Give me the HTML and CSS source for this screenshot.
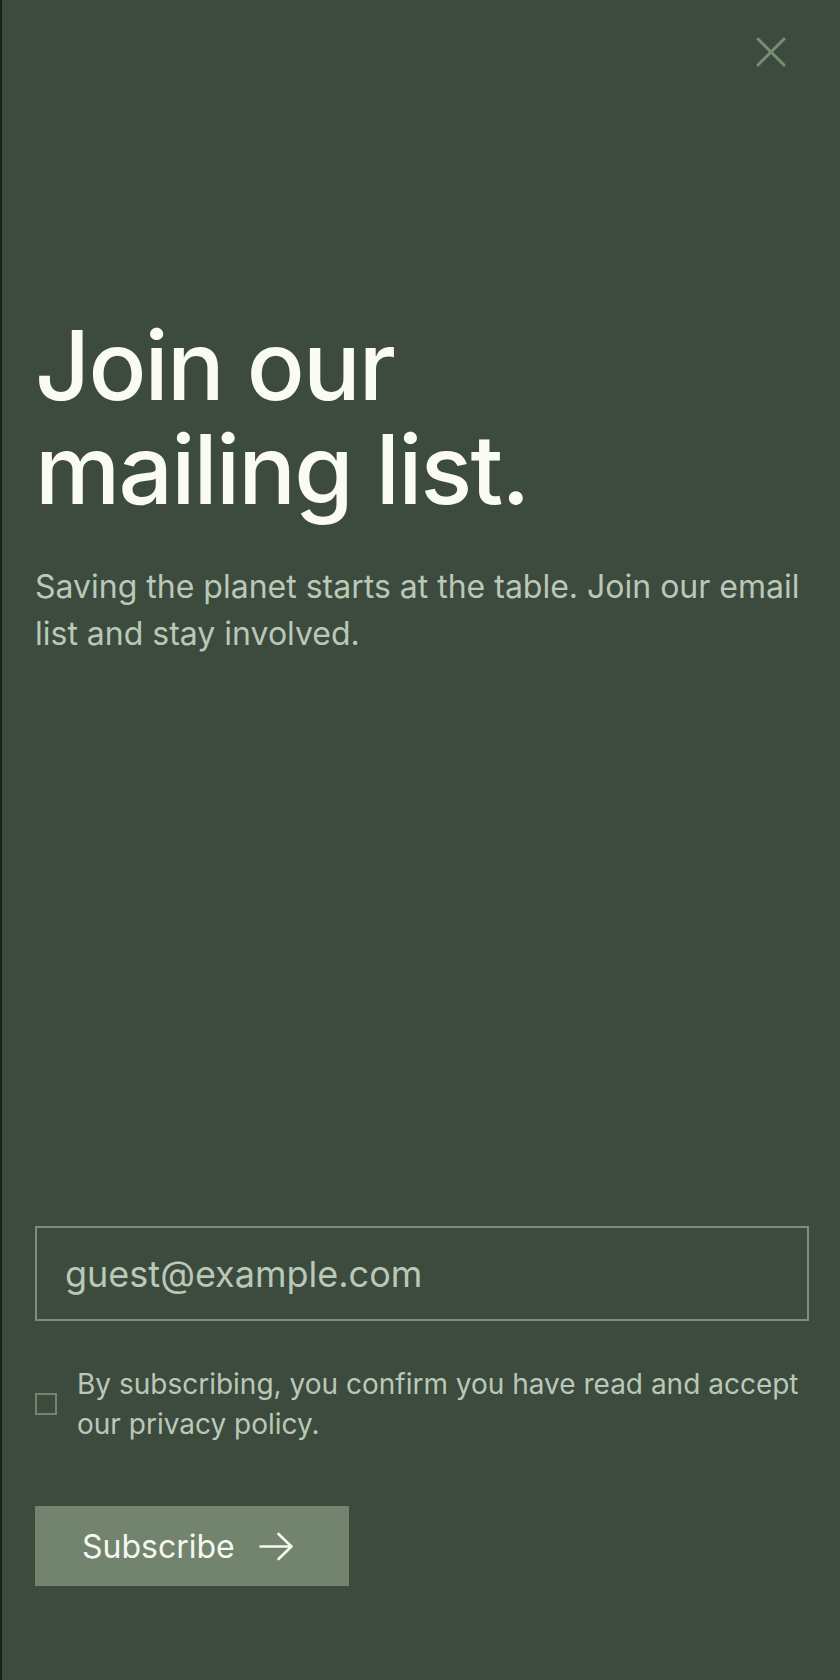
FILE: index.html
```html
<!DOCTYPE html>
<html lang="en">
<head>
<meta charset="utf-8">
<title>Join our mailing list</title>
<link rel="stylesheet" href="styles.css">
</head>
<body>
<div class="panel">
  <div class="topbar">
    <button class="close" type="button" aria-label="Close">
      <svg width="30" height="30" viewBox="0 0 30 30"><path d="M2 2L28 28M28 2L2 28" stroke="#788f76" stroke-width="3" stroke-linecap="round" fill="none"/></svg>
    </button>
  </div>
  <h1 class="title">Join our<br>mailing list.</h1>
  <p class="lead">Saving the planet starts at the table. Join our email list and stay involved.</p>
  <form class="form">
    <input class="email" type="email" placeholder="guest@example.com">
    <label class="consent">
      <span class="box"></span>
      <span class="consent-text">By subscribing, you confirm you have read and accept our privacy policy.</span>
    </label>
    <button class="subscribe" type="button">
      <span>Subscribe</span>
      <svg width="35" height="29" viewBox="0 0 35 29"><path d="M1.5 14.5H32.5M19.5 2L32.5 14.5L19.5 27" stroke="#f6f7f1" stroke-width="2.6" stroke-linecap="round" stroke-linejoin="round" fill="none"/></svg>
    </button>
  </form>
</div>
</body>
</html>
```

FILE: styles.css
```css
* { box-sizing: border-box; }
html, body { margin: 0; padding: 0; }
body {
  background: #3c4b3e;
  font-family: Inter, "Noto Sans", "Liberation Sans", sans-serif;
}
.panel {
  min-height: 1680px;
  border-left: 2px solid #1c211d;
  padding: 37px 31px 94px 33px;
  display: flex;
  flex-direction: column;
}
.topbar {
  display: flex;
  justify-content: flex-end;
  padding-right: 23px;
}
.close {
  width: 30px;
  height: 30px;
  padding: 0;
  border: 0;
  background: none;
  display: block;
}
.close svg { display: block; }
.title {
  margin: 246px 0 0;
  font-size: 96px;
  line-height: 104px;
  font-weight: 500;
  color: #fbfbf6;
  letter-spacing: -1.8px;
}
.lead {
  margin: 42px 0 0;
  font-size: 32px;
  line-height: 47px;
  color: #b9c8b7;
}
.form {
  margin-top: auto;
  display: flex;
  flex-direction: column;
  align-items: flex-start;
}
.email {
  width: 100%;
  height: 95px;
  border: 2px solid #7a9178;
  background: transparent;
  padding: 0 0 0 28px;
  font-family: inherit;
  font-size: 36px;
  color: #b9c8b7;
  outline: none;
}
.email::placeholder { color: #b9c8b7; opacity: 1; }
.consent {
  margin-top: 43px;
  display: flex;
  align-items: center;
  gap: 20px;
}
.box {
  flex: none;
  width: 22px;
  height: 22px;
  border: 2px solid #6f866d;
}
.consent-text {
  font-size: 28px;
  line-height: 40px;
  color: #b9c8b7;
}
.subscribe {
  margin-top: 62px;
  width: 314px;
  height: 80px;
  border: 0;
  background: #72846e;
  display: flex;
  align-items: center;
  gap: 24px;
  padding: 0 0 0 47px;
  font-family: inherit;
  font-size: 32px;
  color: #f6f7f1;
}
.subscribe svg { display: block; flex: none; }
```
